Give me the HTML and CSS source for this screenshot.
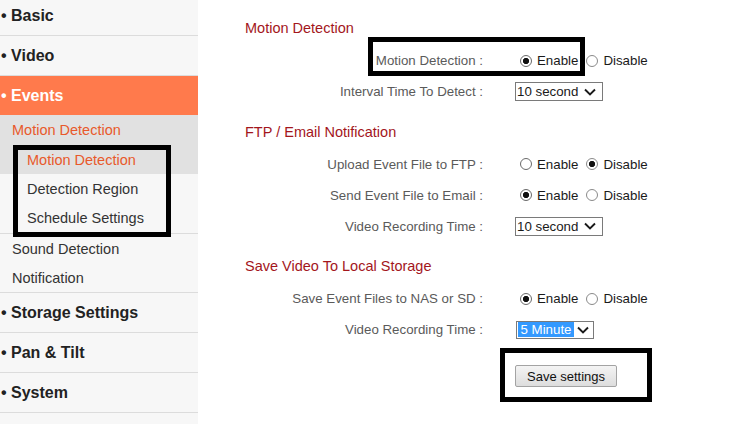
FILE: index.html
```html
<!DOCTYPE html>
<html lang="en">

<head>
  <meta charset="UTF-8">
  <title>Events - Motion Detection</title>
  <link rel="stylesheet" href="styles.css">
</head>

<body>

  <div class="page">

    <nav class="sidebar">
      <div class="menu">
        <div class="menu-link">&bull; Basic</div>
        <div class="menu-link">&bull; Video</div>
        <div class="menu-link active">&bull; Events</div>

        <div class="sub-group">
          <div class="sub-head">Motion Detection</div>
          <div class="sub-item current">Motion Detection</div>
          <div class="sub-item">Detection Region</div>
          <div class="sub-item">Schedule Settings</div>
        </div>

        <div class="sub-group">
          <div class="sub-link">Sound Detection</div>
          <div class="sub-link">Notification</div>
        </div>

        <div class="menu-link">&bull; Storage Settings</div>
        <div class="menu-link">&bull; Pan &amp; Tilt</div>
        <div class="menu-link">&bull; System</div>
      </div>
    </nav>

    <main class="content">

      <section class="section">
        <h2 class="section-title">Motion Detection</h2>
        <div class="fields">
          <div class="field">
            <span class="field-label">Motion Detection :</span>
            <div class="control">
              <input type="radio" class="radio" name="motion" id="motionOn" checked>
              <label for="motionOn">Enable</label>
              <input type="radio" class="radio second" name="motion" id="motionOff">
              <label for="motionOff">Disable</label>
            </div>
          </div>
          <div class="field">
            <span class="field-label">Interval Time To Detect :</span>
            <div class="control">
              <span class="select">
                <span class="select-value">10 second</span>
                <svg class="chevron" width="12" height="8" viewBox="0 0 12 8"><polyline points="1,1.5 6,6.5 11,1.5" fill="none" stroke="#1a1a1a" stroke-width="1.9"/></svg>
              </span>
            </div>
          </div>
        </div>
      </section>

      <section class="section">
        <h2 class="section-title">FTP / Email Notification</h2>
        <div class="fields">
          <div class="field">
            <span class="field-label">Upload Event File to FTP :</span>
            <div class="control">
              <input type="radio" class="radio" name="ftp" id="ftpOn">
              <label for="ftpOn">Enable</label>
              <input type="radio" class="radio second" name="ftp" id="ftpOff" checked>
              <label for="ftpOff">Disable</label>
            </div>
          </div>
          <div class="field">
            <span class="field-label">Send Event File to Email :</span>
            <div class="control">
              <input type="radio" class="radio" name="mail" id="mailOn" checked>
              <label for="mailOn">Enable</label>
              <input type="radio" class="radio second" name="mail" id="mailOff">
              <label for="mailOff">Disable</label>
            </div>
          </div>
          <div class="field">
            <span class="field-label">Video Recording Time :</span>
            <div class="control">
              <span class="select">
                <span class="select-value">10 second</span>
                <svg class="chevron" width="12" height="8" viewBox="0 0 12 8"><polyline points="1,1.5 6,6.5 11,1.5" fill="none" stroke="#1a1a1a" stroke-width="1.9"/></svg>
              </span>
            </div>
          </div>
        </div>
      </section>

      <section class="section">
        <h2 class="section-title">Save Video To Local Storage</h2>
        <div class="fields">
          <div class="field">
            <span class="field-label">Save Event Files to NAS or SD :</span>
            <div class="control">
              <input type="radio" class="radio" name="nas" id="nasOn" checked>
              <label for="nasOn">Enable</label>
              <input type="radio" class="radio second" name="nas" id="nasOff">
              <label for="nasOff">Disable</label>
            </div>
          </div>
          <div class="field">
            <span class="field-label">Video Recording Time :</span>
            <div class="control">
              <span class="select select-focus">
                <span class="select-value">5 Minute</span>
                <svg class="chevron" width="12" height="8" viewBox="0 0 12 8"><polyline points="1,1.5 6,6.5 11,1.5" fill="none" stroke="#1a1a1a" stroke-width="1.9"/></svg>
              </span>
            </div>
          </div>
        </div>
      </section>

      <div class="actions">
        <button class="btn">Save settings</button>
      </div>

    </main>

    <!-- hand drawn marks over the screenshot -->
    <div class="mark mark-menu"></div>
    <div class="mark mark-motion"></div>
    <div class="mark mark-save"></div>

  </div>

</body>

</html>
```

FILE: styles.css
```css
body {
  margin: 0;
  background: #fff;
  font-family: "Liberation Sans", Arial, sans-serif;
}

.page {
  position: relative;
  display: flex;
  height: 424px;
  overflow: hidden;
}

/* sidebar */

.sidebar {
  flex: none;
  width: 198px;
  background: #f7f7f7;
}

.menu {
  margin-top: -3px;
}

.menu-link {
  display: flex;
  align-items: center;
  height: 39px;
  padding-left: 1px;
  border-bottom: 1px solid #dcdcdc;
  font-size: 16px;
  font-weight: bold;
  color: #222;
}

.menu-link:first-child {
  height: 38px;
}

.menu-link.active {
  background: #ff7a4c;
  color: #fff;
  border-bottom: none;
}

.sub-group {
  padding-bottom: 1px;
  border-bottom: 1px solid #dcdcdc;
  font-size: 14.5px;
}

.sub-group + .sub-group {
  padding-bottom: 0;
}

.sub-head {
  display: flex;
  align-items: center;
  height: 30px;
  padding-left: 12px;
  background: #e1e1e1;
  color: #e8592b;
}

.sub-item {
  display: flex;
  align-items: center;
  height: 29px;
  padding-left: 27px;
  color: #333;
}

.sub-item.current {
  background: #e1e1e1;
  color: #e8592b;
}

.sub-link {
  display: flex;
  align-items: center;
  height: 29px;
  padding-left: 12px;
  color: #333;
}

/* content */

.content {
  flex: 1;
  padding: 18px 0 0 47px;
}

.section + .section {
  margin-top: 14.5px;
}

.section-title {
  margin: 0;
  font-size: 14.5px;
  font-weight: normal;
  line-height: 20px;
  color: #a3161c;
}

.fields {
  margin-top: 7px;
}

.field {
  display: grid;
  grid-template-columns: 238px auto;
  column-gap: 32px;
  align-items: center;
  height: 31px;
}

.field-label {
  text-align: right;
  font-size: 13.3px;
  color: #5a5a5a;
}

.control {
  display: flex;
  align-items: center;
  font-size: 13.3px;
  color: #1a1a1a;
}

.radio {
  appearance: none;
  box-sizing: border-box;
  width: 12px;
  height: 12px;
  margin: 0 5px;
  border: 1px solid #6a6a6a;
  border-radius: 50%;
  background: #fff;
}

.radio:checked {
  background: radial-gradient(circle, #111 0 2.8px, #fff 3.4px);
}

.radio.second {
  margin-left: 8px;
  border-color: #8a8a8a;
}

.select {
  display: inline-flex;
  align-items: center;
  box-sizing: border-box;
  height: 19px;
  padding: 0 6px 0 1px;
  gap: 6px;
  border: 1px solid #7a7a7a;
  background: #fff;
}

.select-value {
  line-height: 15px;
}

.select-focus {
  height: 18px;
  padding-right: 4px;
  gap: 3px;
  margin-left: 1px;
}

.select-focus .select-value {
  padding: 0 2.5px;
  background: #3399ff;
  color: #fff;
}

.chevron {
  display: block;
}

.actions {
  margin-top: 20px;
  padding-left: 270px;
}

.btn {
  height: 22px;
  padding: 0 11px;
  border: 1px solid #a3a3a3;
  border-radius: 2px;
  background: linear-gradient(#f4f4f4, #dddddd);
  font-family: "Liberation Sans", Arial, sans-serif;
  font-size: 13px;
  color: #111;
}

/* black annotation boxes */

.mark {
  position: absolute;
  box-sizing: border-box;
  border: 5px solid #000;
  pointer-events: none;
}

.mark-menu {
  left: 13px;
  top: 145px;
  width: 158px;
  height: 92px;
}

.mark-motion {
  left: 368px;
  top: 37px;
  width: 217px;
  height: 39px;
}

.mark-save {
  left: 500px;
  top: 348px;
  width: 152px;
  height: 54px;
}
```
